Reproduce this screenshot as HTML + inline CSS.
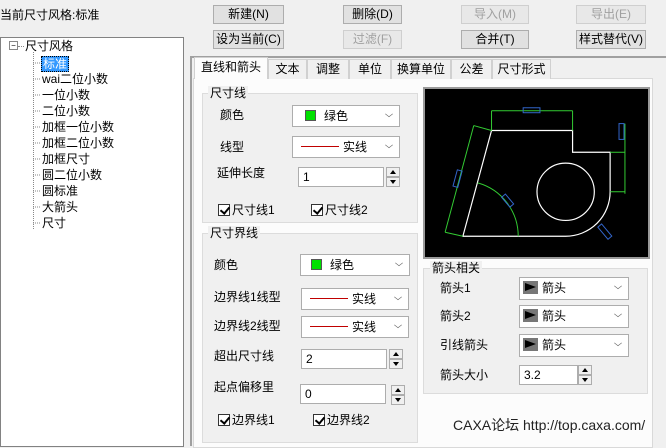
<!DOCTYPE html><html><head><meta charset="utf-8"><style>
*{margin:0;padding:0;box-sizing:border-box}
body{width:666px;height:439px;background:#f0f0f0;position:relative;overflow:hidden;font-family:"Liberation Sans","Noto Sans CJK SC",sans-serif;font-size:12px;color:#000}
.a{position:absolute;white-space:nowrap;line-height:14px}
.btn{position:absolute;height:19px;border:1px solid #adadad;background:#e1e1e1;text-align:center;line-height:17px;font-size:12px}
.dis{color:#a0a0a0;border-color:#cfcfcf;background:#e8e8e8}
.tree{position:absolute;left:0;top:37px;width:184px;height:410px;background:#fff;border:1px solid #828282}
.tab{position:absolute;top:59px;height:20px;border:1px solid #d0d0d0;border-bottom:none;background:#f0f0f0;text-align:center;line-height:18px}
.grp{position:absolute;border:1px solid #dcdcdc;background:#f0f0f0}
.cb{position:absolute;height:22px;border:1px solid #adadad;background:#fff}
.cb .arr{position:absolute;right:6px;top:4px;width:8px;height:8px;border-right:1.5px solid #666;border-bottom:1.5px solid #666;transform:scale(.7,.55) rotate(45deg)}
.in{position:absolute;height:20px;border:1px solid #adadad;background:#fff;padding-left:4px;line-height:18px}
.sp{position:absolute;width:14px;height:20px}
.sp div{height:10px;border:1px solid #adadad;background:#f0f0f0;position:relative}
.sp div::after{content:"";position:absolute;left:3px;top:2px;border-left:3px solid transparent;border-right:3px solid transparent}
.sp .u::after{border-bottom:4px solid #000}
.sp .d::after{border-top:4px solid #000}
.chk{display:inline-block;width:12px;height:12px;border:1px solid #333;background:#fff;vertical-align:-2px;margin-right:2px;position:relative}
.chk::after{content:"";position:absolute;left:3px;top:0;width:4px;height:7px;border-right:2px solid #000;border-bottom:2px solid #000;transform:rotate(40deg)}
.sw{display:inline-block;width:11px;height:11px;background:#00e000;border:1px solid #555;vertical-align:-1px;margin-right:8px}
.ln{display:inline-block;width:38px;height:1px;background:#c00000;vertical-align:4px;margin-right:4px}
.ah{display:inline-block;width:15px;height:13px;background:#777;vertical-align:-2px;margin-right:4px;position:relative}
.ah::after{content:"";position:absolute;left:2px;top:2px;border-top:4px solid transparent;border-bottom:4px solid transparent;border-left:11px solid #000}
.tl{position:absolute;left:105px;top:0;border-top:1px dotted #888;width:10px}
</style></head><body>
<div class="a" style="left:0;top:8px">当前尺寸风格:标准</div>
<div class="tree">
<div class="a" style="left:8px;top:3px;width:9px;height:9px;border:1px solid #888;font-size:8px;line-height:7px;text-align:center">−</div>
<div class="a" style="left:24px;top:1px">尺寸风格</div>
<div style="position:absolute;left:32px;top:14px;height:177px;border-left:1px dotted #888"></div>
<div style="position:absolute;left:17px;top:8px;width:6px;border-top:1px dotted #888"></div>
</div>
<div id="items"></div>
<div class="a" style="left:41px;top:56px;background:#3399ff;color:#fff;padding:0 1px;border:1px dotted #000">标准</div>
<div class="a" style="left:42px;top:72px">wai二位小数</div>
<div class="a" style="left:42px;top:88px">一位小数</div>
<div class="a" style="left:42px;top:104px">二位小数</div>
<div class="a" style="left:42px;top:120px">加框一位小数</div>
<div class="a" style="left:42px;top:136px">加框二位小数</div>
<div class="a" style="left:42px;top:152px">加框尺寸</div>
<div class="a" style="left:42px;top:168px">圆二位小数</div>
<div class="a" style="left:42px;top:184px">圆标准</div>
<div class="a" style="left:42px;top:200px">大箭头</div>
<div class="a" style="left:42px;top:216px">尺寸</div>
<svg style="position:absolute;left:0;top:0" width="50" height="235"><g stroke="#888" stroke-dasharray="1,1"><line x1="33" y1="63" x2="40" y2="63"/><line x1="33" y1="79" x2="40" y2="79"/><line x1="33" y1="95" x2="40" y2="95"/><line x1="33" y1="111" x2="40" y2="111"/><line x1="33" y1="127" x2="40" y2="127"/><line x1="33" y1="143" x2="40" y2="143"/><line x1="33" y1="159" x2="40" y2="159"/><line x1="33" y1="175" x2="40" y2="175"/><line x1="33" y1="191" x2="40" y2="191"/><line x1="33" y1="207" x2="40" y2="207"/><line x1="33" y1="223" x2="40" y2="223"/></g></svg>

<div class="btn" style="left:213px;top:5px;width:71px">新建(N)</div>
<div class="btn" style="left:213px;top:30px;width:71px">设为当前(C)</div>
<div class="btn" style="left:343px;top:5px;width:59px">删除(D)</div>
<div class="btn dis" style="left:343px;top:30px;width:59px">过滤(F)</div>
<div class="btn dis" style="left:461px;top:5px;width:68px">导入(M)</div>
<div class="btn" style="left:461px;top:30px;width:68px">合并(T)</div>
<div class="btn dis" style="left:576px;top:5px;width:70px">导出(E)</div>
<div class="btn" style="left:576px;top:30px;width:70px">样式替代(V)</div>

<div style="position:absolute;left:190px;top:56px;width:480px;height:390px;border-left:2px solid #a0a0a0;border-top:2px solid #a0a0a0;background:#f0f0f0"></div>
<div style="position:absolute;left:193px;top:78px;width:460px;height:370px;background:#fcfcfc;border:1px solid #d9d9d9"></div>
<div class="tab" style="left:194px;top:57px;width:74px;height:22px;background:#fcfcfc;z-index:2">直线和箭头</div>
<div class="tab" style="left:268px;width:39px">文本</div>
<div class="tab" style="left:307px;width:42px">调整</div>
<div class="tab" style="left:349px;width:42px">单位</div>
<div class="tab" style="left:391px;width:60px">换算单位</div>
<div class="tab" style="left:451px;width:41px">公差</div>
<div class="tab" style="left:492px;width:59px">尺寸形式</div>

<div class="grp" style="left:202px;top:93px;width:216px;height:130px"></div>
<div class="a" style="left:208px;top:86px;background:#f0f0f0;padding:0 2px">尺寸线</div>
<div class="a" style="left:220px;top:108px">颜色</div>
<div class="cb" style="left:292px;top:105px;width:108px;line-height:20px;padding-left:12px"><span class="sw"></span>绿色<div class="arr"></div></div>
<div class="a" style="left:220px;top:140px">线型</div>
<div class="cb" style="left:292px;top:136px;width:108px;line-height:20px;padding-left:8px"><span class="ln"></span>实线<div class="arr"></div></div>
<div class="a" style="left:217px;top:166px">延伸长度</div>
<div class="in" style="left:298px;top:167px;width:86px">1</div>
<div class="sp" style="left:386px;top:167px"><div class="u"></div><div class="d"></div></div>
<div class="a" style="left:218px;top:203px"><span class="chk"></span>尺寸线1</div>
<div class="a" style="left:311px;top:203px"><span class="chk"></span>尺寸线2</div>

<div class="grp" style="left:202px;top:233px;width:216px;height:210px"></div>
<div class="a" style="left:208px;top:226px;background:#f0f0f0;padding:0 2px">尺寸界线</div>
<div class="a" style="left:214px;top:258px">颜色</div>
<div class="cb" style="left:300px;top:254px;width:110px;line-height:20px;padding-left:10px"><span class="sw"></span>绿色<div class="arr"></div></div>
<div class="a" style="left:214px;top:290px">边界线1线型</div>
<div class="cb" style="left:301px;top:288px;width:108px;line-height:20px;padding-left:8px"><span class="ln"></span>实线<div class="arr"></div></div>
<div class="a" style="left:214px;top:319px">边界线2线型</div>
<div class="cb" style="left:301px;top:316px;width:108px;line-height:20px;padding-left:8px"><span class="ln"></span>实线<div class="arr"></div></div>
<div class="a" style="left:214px;top:349px">超出尺寸线</div>
<div class="in" style="left:301px;top:349px;width:86px">2</div>
<div class="sp" style="left:389px;top:349px"><div class="u"></div><div class="d"></div></div>
<div class="a" style="left:214px;top:380px">起点偏移里</div>
<div class="in" style="left:300px;top:384px;width:86px">0</div>
<div class="sp" style="left:391px;top:385px"><div class="u"></div><div class="d"></div></div>
<div class="a" style="left:218px;top:413px"><span class="chk"></span>边界线1</div>
<div class="a" style="left:313px;top:413px"><span class="chk"></span>边界线2</div>

<svg style="position:absolute;left:423px;top:87px;border:2px solid #9a9a9a" width="227" height="172" viewBox="425 89 225 170">
<rect x="420" y="80" width="240" height="190" fill="#000"/>
<g fill="none" stroke="#fff" stroke-width="1.2">
<path d="M492 131 H574 V153 H612 V193 A45 45 0 0 1 567 238 H463 Z"/>
<circle cx="567" cy="193" r="29"/>
</g>
<g fill="none" stroke="#3c3" stroke-width="1">
<path d="M492 111 H574 M492 111 V131 M574 111 V131"/>
<path d="M627 124 V195 M612 153 H627 M612 193 H627"/>
<path d="M474 126 L445 234 M474 126 L492 131 M445 234 L463 238"/>
<path d="M478 184 A56 56 0 0 1 519 238"/>
</g>
<g fill="none" stroke="#36c" stroke-width="1">
<rect x="524" y="108" width="17" height="5"/>
<rect x="621" y="124" width="5" height="16"/>
<rect x="455" y="171" width="5" height="17" transform="rotate(15 457 180)"/>
<rect x="506" y="195" width="5" height="13" transform="rotate(-40 509 202)"/>
<rect x="604" y="225" width="5" height="16" transform="rotate(-40 607 233)"/>
</g>
</svg>

<div class="grp" style="left:423px;top:268px;width:225px;height:126px"></div>
<div class="a" style="left:430px;top:261px;background:#f0f0f0;padding:0 2px">箭头相关</div>
<div class="a" style="left:440px;top:281px">箭头1</div>
<div class="cb" style="left:519px;top:277px;width:110px;height:23px;line-height:21px;padding-left:3px"><span class="ah"></span>箭头<div class="arr"></div></div>
<div class="a" style="left:440px;top:309px">箭头2</div>
<div class="cb" style="left:519px;top:305px;width:110px;height:23px;line-height:21px;padding-left:3px"><span class="ah"></span>箭头<div class="arr"></div></div>
<div class="a" style="left:440px;top:338px">引线箭头</div>
<div class="cb" style="left:519px;top:334px;width:110px;height:23px;line-height:21px;padding-left:3px"><span class="ah"></span>箭头<div class="arr"></div></div>
<div class="a" style="left:440px;top:368px">箭头大小</div>
<div class="in" style="left:519px;top:365px;width:59px">3.2</div>
<div class="sp" style="left:578px;top:365px"><div class="u"></div><div class="d"></div></div>

<div class="a" style="left:453px;top:417px;font-size:14px;line-height:16px;color:#222">CAXA论坛 http://top.caxa.com/</div>
</body></html>
